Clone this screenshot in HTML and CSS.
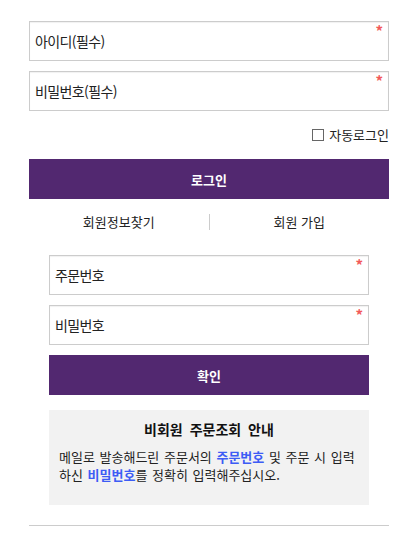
FILE: index.html
```html
<!DOCTYPE html>
<html lang="ko">
<head>
<meta charset="utf-8">
<link rel="stylesheet" href="styles.css">
</head>
<body>
<div class="page">
  <div class="field first"><span class="ph">아이디(필수)</span><span class="req">*</span></div>
  <div class="field"><span class="ph">비밀번호(필수)</span><span class="req">*</span></div>
  <div class="auto">
    <span class="check"></span><span class="auto-label">자동로그인</span>
  </div>
  <div class="btn">로그인</div>
  <div class="links">
    <span class="link">회원정보찾기</span>
    <span class="divider"></span>
    <span class="link">회원 가입</span>
  </div>
  <div class="guest">
    <div class="field first"><span class="ph">주문번호</span><span class="req">*</span></div>
    <div class="field"><span class="ph">비밀번호</span><span class="req">*</span></div>
    <div class="btn confirm">확인</div>
    <div class="info">
      <div class="info-title">비회원 주문조회 안내</div>
      <p class="info-text">메일로 발송해드린 주문서의 <b class="hl">주문번호</b> 및 주문 시 입력<br>하신 <b class="hl">비밀번호</b>를 정확히 입력해주십시오.</p>
    </div>
  </div>
  <div class="rule"></div>
</div>
</body>
</html>
```
FILE: styles.css
```css
* { box-sizing: border-box; }
html, body { margin: 0; padding: 0; background: #fff; }
body {
  font-family: "Noto Sans CJK KR", "Noto Sans", sans-serif;
  color: #222;
}
.page {
  width: 360px;
  margin-left: 29px;
  padding-top: 21px;
}
.field {
  position: relative;
  height: 40px;
  border: 1px solid #cccccc;
  box-shadow: inset 0 1px 1px rgba(0,0,0,0.06);
  display: flex;
  align-items: center;
  padding-left: 5px;
  margin-top: 10px;
  background: #fff;
}
.field.first { margin-top: 0; }
.ph { font-size: 14px; letter-spacing: -0.6px; color: #222; line-height: 20px; }
.req {
  position: absolute;
  right: 5px;
  top: 1px;
  color: #f25a5a;
  font-size: 15px;
  line-height: 16px;
  font-weight: bold;
}
.auto {
  display: flex;
  justify-content: flex-end;
  align-items: center;
  height: 12px;
  margin: 18px 0;
}
.check {
  width: 12px;
  height: 12px;
  border: 1px solid #666;
  background: #fff;
  margin-right: 5px;
}
.auto-label { font-size: 13px; line-height: 14px; color: #222; }
.btn {
  height: 40px;
  background: #522870;
  color: #fff;
  font-weight: bold;
  font-size: 13px;
  display: flex;
  align-items: center;
  justify-content: center;
}
.links {
  display: flex;
  align-items: center;
  height: 16px;
  margin-top: 15px;
}
.link {
  flex: 1;
  text-align: center;
  font-size: 13px;
  line-height: 16px;
  color: #222;
}
.divider {
  width: 1px;
  height: 16px;
  background: #ccc;
}
.guest {
  margin: 25px 20px 0;
}
.confirm { margin-top: 10px; }
.info {
  margin-top: 15px;
  background: #f2f2f2;
  padding: 9px 10px 21px;
}
.info-title {
  text-align: center;
  font-size: 14px;
  font-weight: bold;
  word-spacing: 3px;
  line-height: 20px;
  color: #111;
}
.info-text {
  margin: 9px 0 0;
  font-size: 13px;
  word-spacing: 1px;
  line-height: 18px;
  white-space: nowrap;
  color: #222;
}
.hl { color: #3d5cf5; }
.rule {
  height: 1px;
  background: #cccccc;
  margin-top: 20px;
}
```
